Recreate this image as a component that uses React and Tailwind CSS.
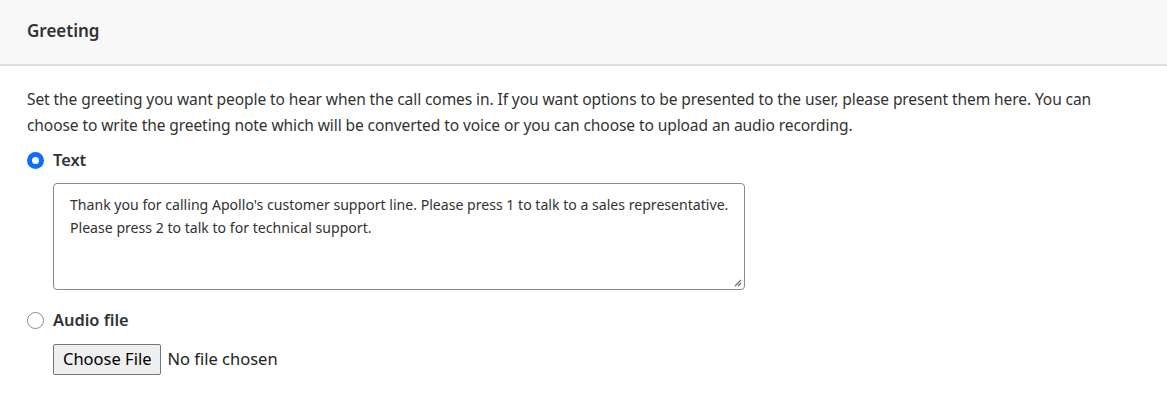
export default function App() {
  return (
    <div className="w-[1167px] h-[403px] bg-white text-[#212529] font-['Noto_Sans',sans-serif]">
      <div className="h-[66px] bg-[#f8f8f8] border-b-2 border-[#e0e0e0] flex items-center px-[27px]">
        <h2 className="text-[17px] font-semibold text-[#323232] -mt-[2px]">Greeting</h2>
      </div>
      <div className="px-[27px] pt-[20px]">
        <p className="text-[15.55px] leading-[26px] text-[#323232] tracking-[-0.1px] whitespace-nowrap">
          Set the greeting you want people to hear when the call comes in. If you want options to be presented to the user, please present them here. You can
          <br />
          choose to write the greeting note which will be converted to voice or you can choose to upload an audio recording.
        </p>
        <label className="flex items-center gap-[9px] mt-[10px] h-[24px]">
          <span className="w-[17px] h-[17px] rounded-full bg-[#0d6efd] flex items-center justify-center">
            <span className="w-[7px] h-[7px] rounded-full bg-white" />
          </span>
          <span className="text-[16.4px] font-semibold text-[#323232]">Text</span>
        </label>
        <div className="ml-[26px] mt-[11px] w-[692px] h-[107px] border border-[#8a8a8a] rounded-[4px] relative px-[16px] pt-[9px]">
          <p className="text-[14.1px] leading-[23px] text-[#323232] whitespace-nowrap">
            Thank you for calling Apollo's customer support line. Please press 1 to talk to a sales representative.
            <br />
            Please press 2 to talk to for technical support.
          </p>
          <svg className="absolute right-[2px] bottom-[2px]" width="9" height="9" viewBox="0 0 9 9">
            <path d="M8 2 L2 8 M8 5 L5 8" stroke="#6b6b6b" strokeWidth="1.2" />
          </svg>
        </div>
        <label className="flex items-center gap-[9px] mt-[18px] h-[24px]">
          <span className="w-[17px] h-[17px] rounded-full border border-[#8c8c8c] bg-white" />
          <span className="text-[16.4px] font-semibold text-[#323232]">Audio file</span>
        </label>
        <div className="ml-[26px] mt-[12px] flex items-center gap-[6px]">
          <span className="h-[31px] px-[9px] flex items-center border border-[#767676] rounded-[2px] bg-[#efefef] text-[16.5px] text-black">Choose File</span>
          <span className="text-[16.5px] text-[#222]">No file chosen</span>
        </div>
      </div>
    </div>
  );
}
